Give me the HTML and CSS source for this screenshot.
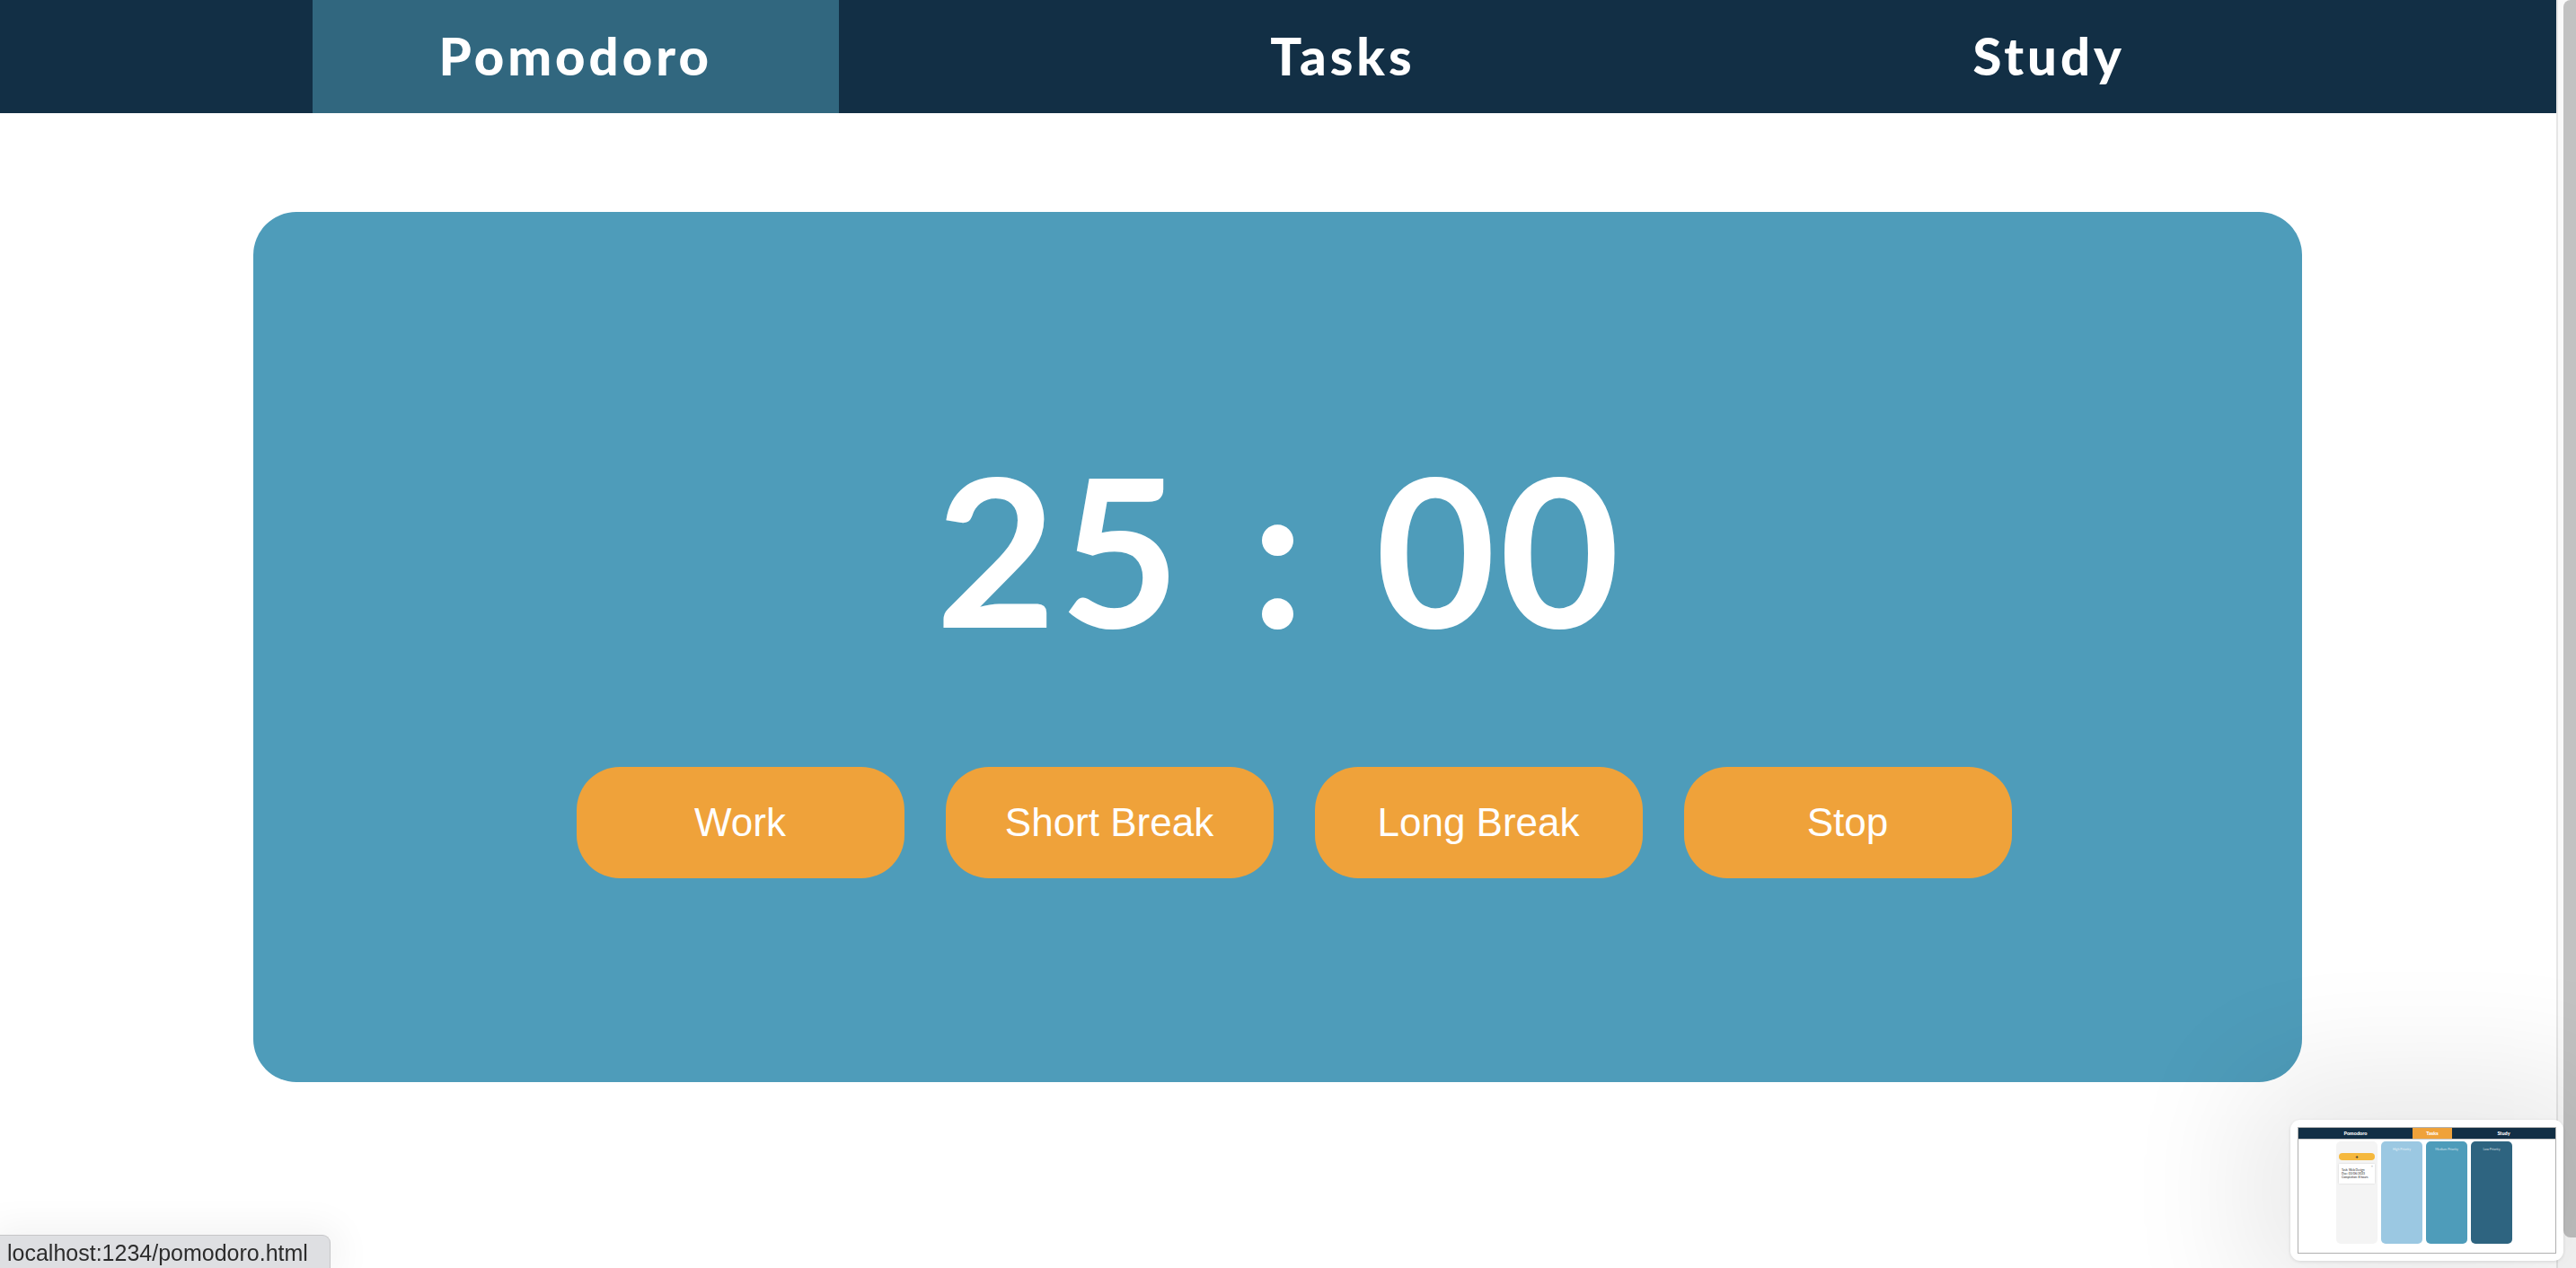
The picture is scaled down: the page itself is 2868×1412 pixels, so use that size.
FILE: index.html
```html
<!DOCTYPE html>
<html lang="en">
<head>
<meta charset="utf-8">
<title>Pomodoro</title>
<link rel="stylesheet" href="styles.css">
</head>
<body>
<div class="window">
  <div class="page">
    <nav class="nav">
      <a class="tab tab-pomodoro active" href="#">Pomodoro</a>
      <a class="tab tab-tasks" href="#">Tasks</a>
      <a class="tab tab-study" href="#">Study</a>
    </nav>
    <main class="card">
      <div class="timer">25 : 00</div>
      <div class="controls">
        <button class="btn">Work</button>
        <button class="btn">Short Break</button>
        <button class="btn">Long Break</button>
        <button class="btn">Stop</button>
      </div>
    </main>
  </div>
  <div class="scrollbar"><div class="thumb"></div></div>
</div>

<div class="status">localhost:1234/pomodoro.html</div>

<div class="preview">
  <div class="mini">
    <div class="mini-nav">
      <span class="mini-tab mt-pomodoro">Pomodoro</span>
      <span class="mini-tab mt-tasks on">Tasks</span>
      <span class="mini-tab mt-study">Study</span>
    </div>
    <div class="mini-board">
      <div class="mini-col inbox">
        <div class="mini-add">+</div>
        <div class="mini-task">
          <span class="mini-close">×</span>
          <div>Task: Web Design</div>
          <div>Due: 03/06/2023</div>
          <div>Completion: 8 hours</div>
        </div>
      </div>
      <div class="mini-col high">High Priority</div>
      <div class="mini-col medium">Medium Priority</div>
      <div class="mini-col low">Low Priority</div>
    </div>
  </div>
</div>
</body>
</html>
```

FILE: styles.css
```css
html, body {
  margin: 0;
  padding: 0;
  height: 100%;
  overflow: hidden;
  background: #ffffff;
}

.window {
  display: flex;
  height: 1412px;
}

.page {
  flex: 1;
  min-width: 0;
}

/* ---------- top navigation ---------- */
.nav {
  display: flex;
  justify-content: space-evenly;
  height: 126px;
  padding-left: 8px;
  background: #122f45;
}

.tab {
  display: flex;
  align-items: center;
  justify-content: center;
  color: #ffffff;
  text-decoration: none;
  font-family: "Lato", "DejaVu Sans", sans-serif;
  font-weight: 900;
  font-size: 58px;
  letter-spacing: 4px;
  padding-bottom: 4px;
  box-sizing: border-box;
}

.tab.active {
  background: #31677f;
}

.tab-pomodoro { width: 586px; }
.tab-tasks { width: 443px; }
.tab-study { width: 450px; }

/* ---------- timer card ---------- */
.card {
  margin: 110px 283px 0 282px;
  height: 969px;
  box-sizing: border-box;
  padding-top: 258px;
  background: #4e9cba;
  border-radius: 48px;
}

.timer {
  font-family: "Lato", "Liberation Sans", sans-serif;
  font-weight: 700;
  font-size: 231px;
  line-height: 1;
  color: #ffffff;
  text-align: center;
  letter-spacing: 4px;
  word-spacing: 15px;
  padding-left: 4px;
}

.controls {
  display: flex;
  justify-content: center;
  gap: 46px;
  margin-top: 129px;
  padding-left: 36px;
}

.btn {
  width: 365px;
  height: 124px;
  border: 0;
  border-radius: 48px;
  background: #efa23a;
  color: #ffffff;
  font-family: "Liberation Sans", Arial, sans-serif;
  font-size: 44px;
  padding: 0;
  cursor: pointer;
}

/* ---------- fake scrollbar ---------- */
.scrollbar {
  width: 22px;
  box-sizing: border-box;
  border-left: 2px solid #e6e6e6;
  background: #fafafa;
  padding-left: 6px;
}

.thumb {
  width: 14px;
  height: 1378px;
  background: #c2c2c2;
  border-radius: 8px 0 0 8px;
}

/* ---------- status bubble ---------- */
.status {
  position: fixed;
  left: 0;
  bottom: 0;
  height: 37px;
  width: 368px;
  box-sizing: border-box;
  padding-left: 8px;
  background: #dedfe2;
  border-top: 1px solid #c6c6c8;
  border-right: 1px solid #c6c6c8;
  border-top-right-radius: 9px;
  color: #2c2c2c;
  font-family: "Liberation Sans", Arial, sans-serif;
  font-size: 25px;
  line-height: 38px;
  box-shadow: 0 0 40px 10px rgba(0, 0, 0, 0.05);
  white-space: nowrap;
}

/* ---------- screenshot preview thumbnail ---------- */
.preview {
  position: fixed;
  right: 14px;
  bottom: 8px;
  width: 304px;
  height: 157px;
  background: #ffffff;
  border-radius: 11px;
  box-shadow: 0 0 140px 50px rgba(0, 0, 0, 0.09), 0 1px 4px rgba(0, 0, 0, 0.12);
}

.mini {
  position: absolute;
  top: 8px;
  left: 8px;
  right: 8px;
  bottom: 8px;
  border: 1px solid #b0b0b0;
  background: #ffffff;
  overflow: hidden;
}

.mini-nav {
  display: flex;
  height: 12px;
  background: #122f45;
  border-bottom: 1px solid #c9c9c9;
}

.mini-tab {
  display: flex;
  align-items: center;
  justify-content: center;
  color: #ffffff;
  font-family: "Lato", sans-serif;
  font-weight: 900;
  font-size: 5.5px;
}

.mt-pomodoro { width: 127px; }
.mt-tasks { width: 44px; }
.mt-study { flex: 1; }

.mini-tab.on {
  background: #efa23a;
}

.mini-board {
  display: flex;
  gap: 4px;
  padding: 2px 0 0 42px;
}

.mini-col {
  width: 46px;
  height: 114px;
  box-sizing: border-box;
  border-radius: 5px;
  padding-top: 6px;
  text-align: center;
  color: rgba(255, 255, 255, 0.75);
  font-family: "Lato", sans-serif;
  font-size: 3.6px;
}

.mini-col.inbox {
  background: #f4f4f4;
  padding: 13px 3px 0;
}

.mini-col.high { background: #9bc8e2; }
.mini-col.medium { background: #4e9cba; }
.mini-col.low { background: #2e6480; }

.mini-add {
  height: 8px;
  border-radius: 4px;
  background: #f5b83d;
  color: #222222;
  font-family: "Lato", sans-serif;
  font-weight: 900;
  font-size: 6px;
  line-height: 8px;
}

.mini-task {
  position: relative;
  margin-top: 4px;
  height: 22px;
  box-sizing: border-box;
  padding: 5px 3px 0;
  background: #ffffff;
  box-shadow: 0 0 2px rgba(0, 0, 0, 0.15);
  text-align: left;
  color: #222222;
  font-size: 3.3px;
  line-height: 4.2px;
}

.mini-close {
  position: absolute;
  top: 1px;
  right: 2px;
  color: #9a9a9a;
  font-size: 4px;
}
```
